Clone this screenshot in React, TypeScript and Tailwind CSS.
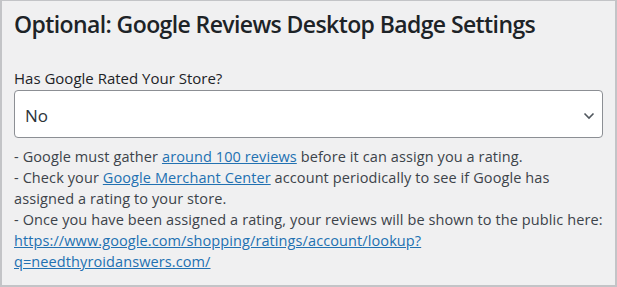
export default function App() {
  return (
    <div className="w-[617px] h-[287px] bg-white">
      <div
        className="w-[617px] h-[287px] border-t border-l-2 border-r-2 border-b-2 border-[#c3c4c7] bg-[#f0f0f1] px-3 pt-[8px]"
        style={{ fontFamily: '"Open Sans", "Noto Sans", sans-serif' }}
      >
        {/* Titulo */}
        <h2 className="text-[23px] leading-[30px] font-semibold text-[#1d2327] tracking-[-0.6px]">
          Optional: Google Reviews Desktop Badge Settings
        </h2>

        {/* Campo */}
        <label className="block mt-[29px] text-[15px] leading-[20px] text-[#1d2327]">
          Has Google Rated Your Store?
        </label>
        <div className="mt-[2px] w-[589px] h-[48px] bg-white border border-[#8c8f94] rounded-[4px] flex items-center justify-between pt-[3px] pl-[10px] pr-[7px]">
          <span className="text-[17px] text-[#2c3338]">No</span>
          <svg width="12" height="8" viewBox="0 0 12 8" fill="none">
            <path d="M1.5 1.5 L6 6 L10.5 1.5" stroke="#50575e" strokeWidth="1.6" />
          </svg>
        </div>

        {/* Ajuda */}
        <p className="mt-[8px] text-[14.5px] leading-[21px] text-[#3c434a] tracking-[0.1px] whitespace-nowrap">
          - Google must gather{" "}
          <a href="#" className="text-[#2271b1] underline">
            around 100 reviews
          </a>{" "}
          before it can assign you a rating.
          <br />- Check your{" "}
          <a href="#" className="text-[#2271b1] underline">
            Google Merchant Center
          </a>{" "}
          account periodically to see if Google has
          <br />
          assigned a rating to your store.
          <br />- Once you have been assigned a rating, your reviews will be shown to the public here:
          <br />
          <a href="#" className="text-[#2271b1] underline">
            https://www.google.com/shopping/ratings/account/lookup?
            <br />
            q=needthyroidanswers.com/
          </a>
        </p>
      </div>
    </div>
  );
}
